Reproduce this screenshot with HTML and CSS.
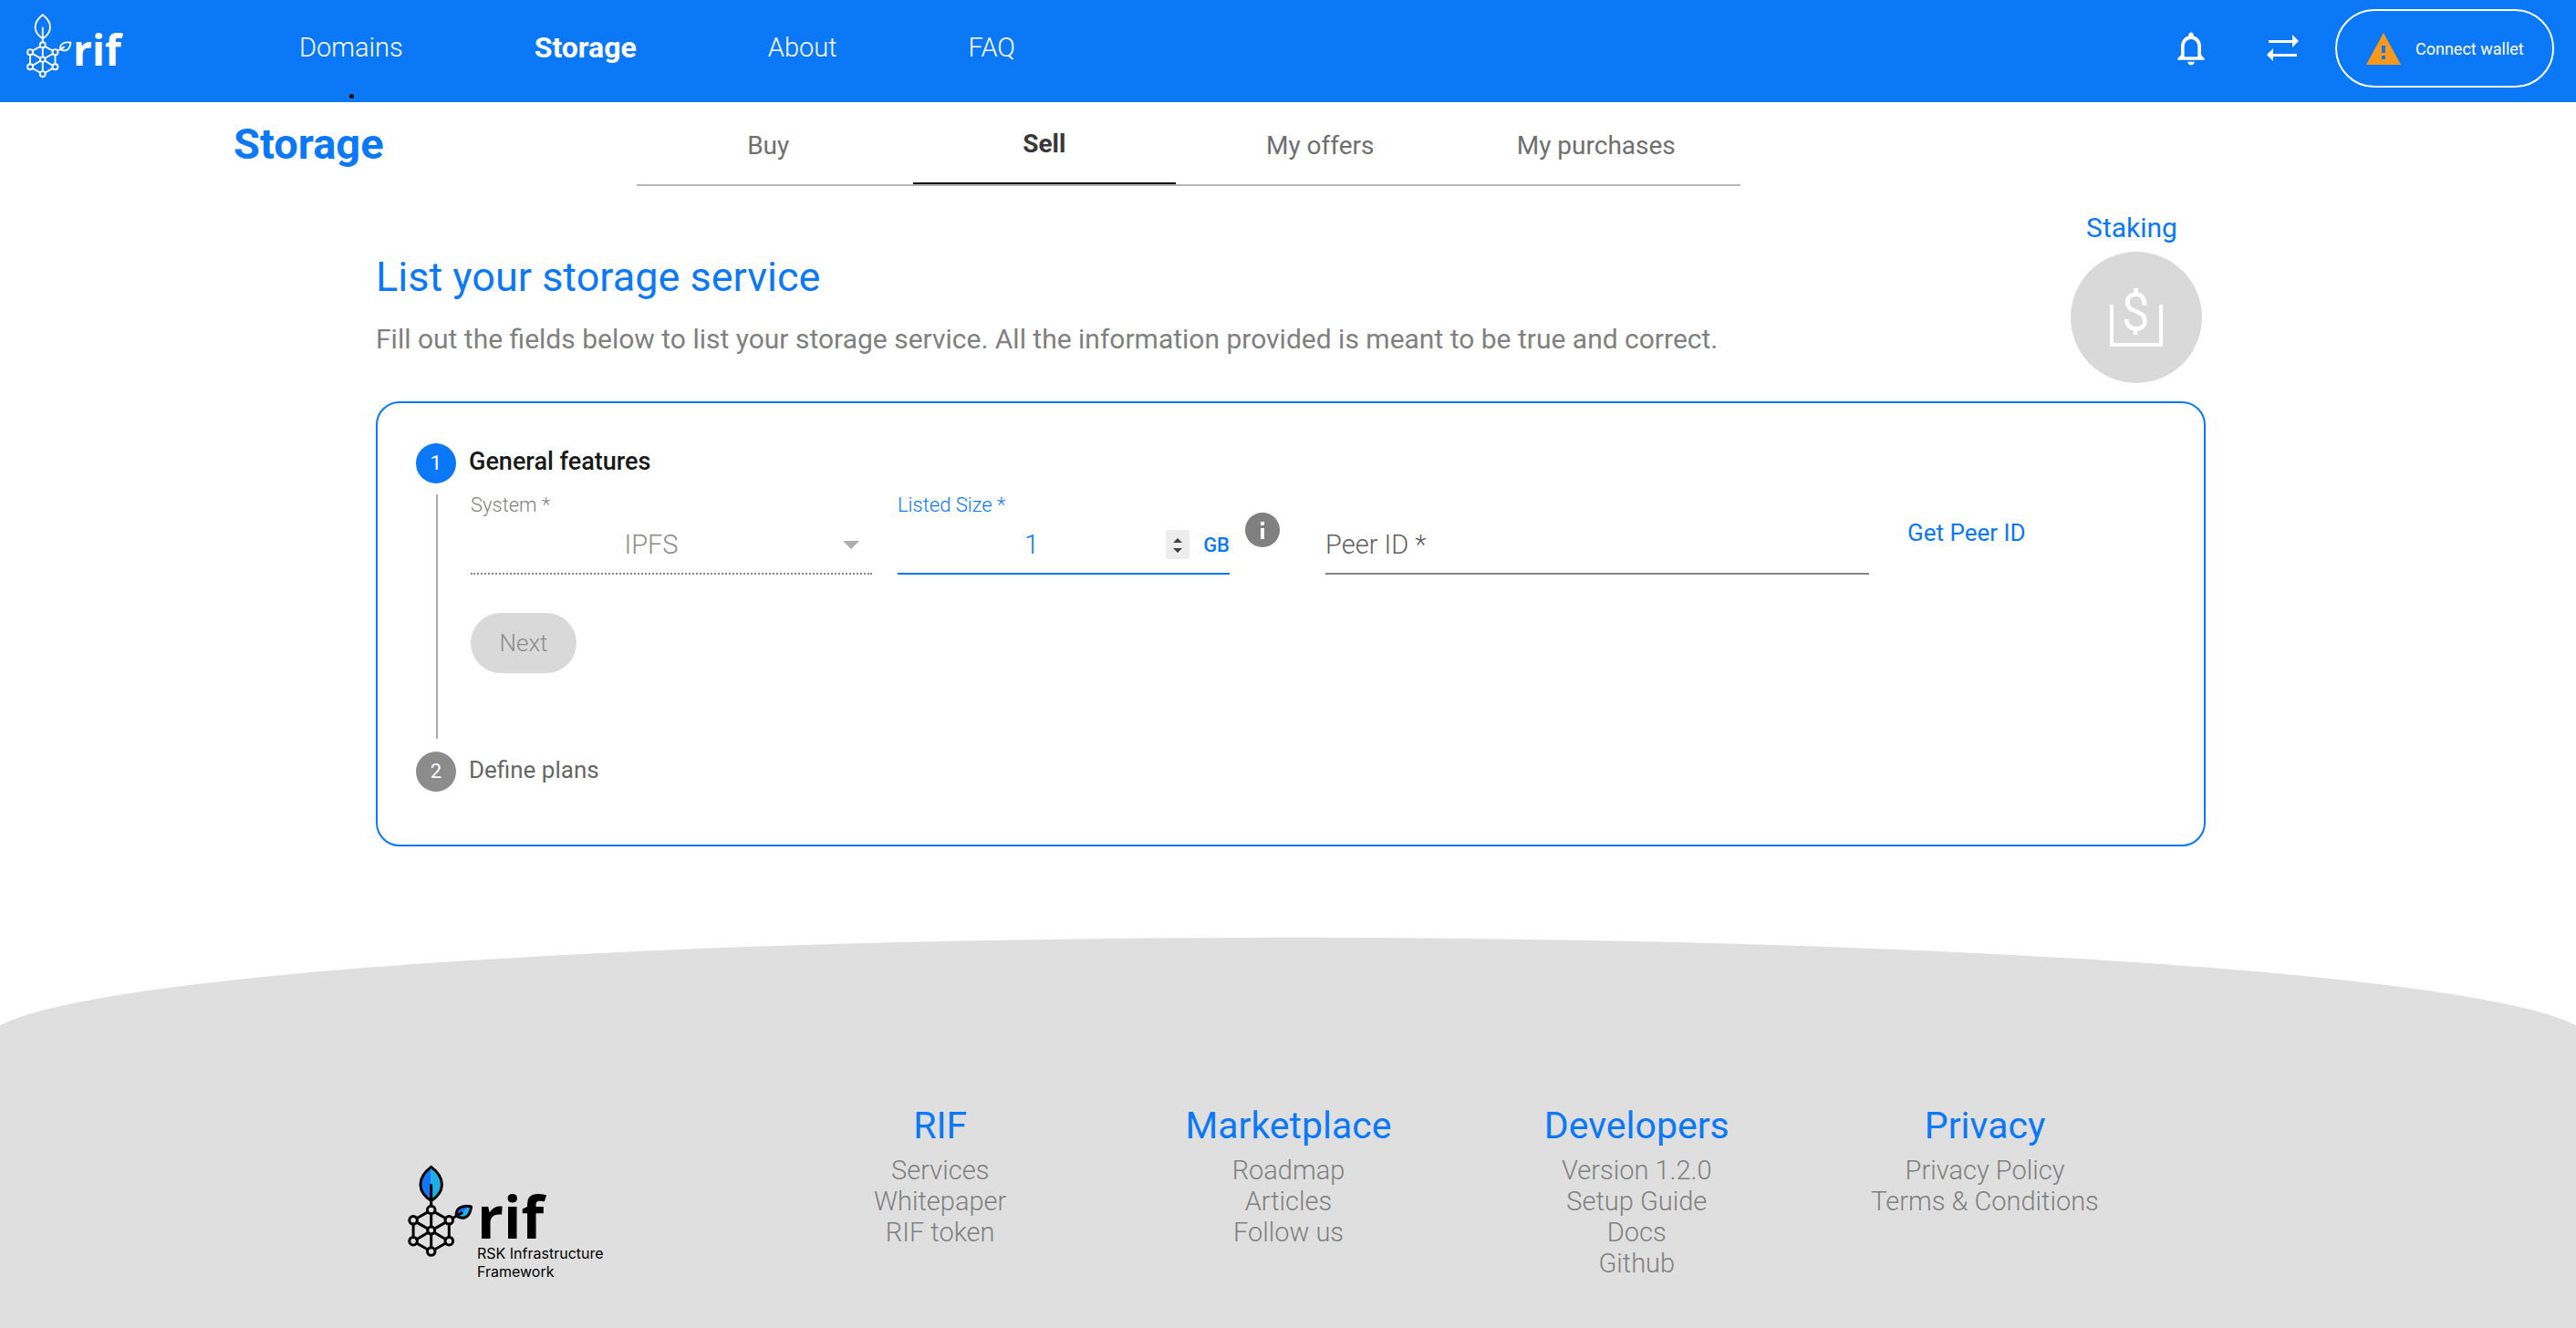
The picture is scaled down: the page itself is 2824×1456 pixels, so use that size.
FILE: index.html
```html
<!DOCTYPE html>
<html lang="en">
<head>
<meta charset="utf-8">
<meta name="viewport" content="width=device-width, initial-scale=1">
<title>RIF Storage - Sell</title>
<link rel="stylesheet" href="styles.css">
</head>
<body>
<svg class="defs" aria-hidden="true">
  <symbol id="rif-mark" viewBox="78 50 222 310">
    <path class="leaf-a" d="M158 60C106 100 114 142 158 172Z"/>
    <path class="leaf-b" d="M158 60C210 100 202 142 158 172Z"/>
    <path class="leaf-a" d="M240 222C238 194 264 186 290 191Z"/>
    <path class="leaf-b" d="M240 222C272 240 287 218 290 191Z"/>
    <g class="mark-line">
      <path d="M158 60C108 98 114 145 158 172C202 145 208 98 158 60ZM158 121V189M241 222C238 194 264 186 290 191C287 218 272 240 241 222ZM228 230L259 212"/>
      <path d="M158 215V257M158 283V326M99 249V292M217 249V292M147 209L110 230M169 209L206 230M110 243L147 264M206 243L169 264M110 299L147 277M206 299L169 277M110 312L147 333M206 312L169 333"/>
      <circle cx="158" cy="202" r="13"/><circle cx="217" cy="236" r="13"/><circle cx="217" cy="305" r="13"/>
      <circle cx="158" cy="339" r="13"/><circle cx="99" cy="305" r="13"/><circle cx="99" cy="236" r="13"/>
      <circle cx="158" cy="270" r="12"/>
    </g>
  </symbol>
</svg>

<header class="topbar">
  <a class="brand" href="#" aria-label="RIF home">
    <svg class="brand-mark"><use href="#rif-mark"/></svg>
    <span class="brand-name">rif</span>
  </a>
  <nav class="main-nav">
    <a class="has-dot" href="#">Domains</a>
    <a class="current" href="#">Storage</a>
    <a href="#">About</a>
    <a href="#">FAQ</a>
  </nav>
  <div class="actions">
    <button class="icon-button" type="button" aria-label="Notifications">
      <svg class="bell" viewBox="0 0 24 24"><path fill="currentColor" d="M12 22c1.1 0 2-.9 2-2h-4c0 1.100.9 2 2 2zm6-6v-5c0-3.070-1.630-5.640-4.500-6.320V4c0-.83-.67-1.500-1.500-1.500s-1.500.67-1.500 1.500v.68C7.640 5.360 6 7.920 6 11v5l-2 2v1h16v-1l-2-2zm-2 1H8v-6c0-2.480 1.510-4.500 4-4.500s4 2.020 4 4.500v6z"/></svg>
    </button>
    <button class="icon-button" type="button" aria-label="Transactions">
      <svg class="swap" viewBox="0 0 35 30"><path fill="currentColor" d="M2 6H28V0L35 7L28 14V9H2ZM33 21H7V15L0 22L7 29V24H33Z"/></svg>
    </button>
    <button class="wallet" type="button">
      <svg class="warning" viewBox="0 0 38 35"><path fill="#f8991d" fill-rule="evenodd" d="M19 0L38 35H0ZM17 14V22H21V14ZM17 25V29H21V25Z"/></svg>
      Connect wallet
    </button>
  </div>
</header>

<section class="subbar">
  <h1>Storage</h1>
  <nav class="tabs">
    <a href="#">Buy</a>
    <a class="current" href="#">Sell</a>
    <a href="#">My offers</a>
    <a href="#">My purchases</a>
  </nav>
</section>

<main class="content">
  <div class="intro">
    <div class="intro-text">
      <h2>List your storage service</h2>
      <p>Fill out the fields below to list your storage service. All the information provided is meant to be true and correct.</p>
    </div>
    <div class="staking">
      <span class="staking-label" id="staking-label">Staking</span>
      <button class="staking-button" type="button" aria-labelledby="staking-label">
        <svg viewBox="0 0 174 192" fill="none" stroke="#fff"><path stroke-width="12" d="M6 54V186H168V54"/><path stroke-width="14" d="M114 56C114 28 100 20 86 20C68 20 58 32 58 46C58 64 68 69 86 76C104 83 115 90 115 108C115 124 104 133 85 133C66 133 55 122 55 102M86 0V20M84 133V153"/></svg>
      </button>
    </div>
  </div>

  <form class="card">
    <div class="step">
      <span class="step-number active">1</span>
      <h3 class="step-title active">General features</h3>
    </div>
    <div class="step-body">
      <div class="fields">
        <div class="field">
          <label for="system">System *</label>
          <div class="control disabled">
            <select id="system" disabled><option>IPFS</option></select>
            <svg class="caret" viewBox="0 0 18 9"><path fill="#adadad" d="M0 0H18L9 9Z"/></svg>
          </div>
        </div>
        <div class="size-group">
          <div class="field focused">
            <label for="size">Listed Size *</label>
            <div class="control">
              <input id="size" type="number" value="1">
              <svg class="spinner" viewBox="0 0 26 32"><path fill="#404040" d="M8 14L13 9L18 14ZM8 20L13 25L18 20Z"/></svg>
              <span class="unit">GB</span>
            </div>
          </div>
          <svg class="info" viewBox="0 0 38 38" role="img" aria-label="Information"><circle cx="19" cy="19" r="19" fill="#808080"/><path fill="#fff" d="M17 10H21V14H17ZM17 17H21V29H17Z"/></svg>
        </div>
        <div class="field peer">
          <div class="control">
            <input type="text" placeholder="Peer ID *" aria-label="Peer ID">
          </div>
        </div>
        <a class="peer-link" href="#">Get Peer ID</a>
      </div>
      <button class="next" type="button" disabled>Next</button>
    </div>
    <div class="step">
      <span class="step-number">2</span>
      <h3 class="step-title">Define plans</h3>
    </div>
  </form>
</main>

<footer class="footer">
  <a class="footer-brand" href="#">
    <svg class="footer-mark" aria-hidden="true"><use href="#rif-mark"/></svg>
    <span class="footer-words">
      <span class="footer-name">rif</span>
      <span class="footer-caption">RSK Infrastructure<br>Framework</span>
    </span>
  </a>
  <div class="footer-column">
    <h2>RIF</h2>
    <a href="#">Services</a>
    <a href="#">Whitepaper</a>
    <a href="#">RIF token</a>
  </div>
  <div class="footer-column">
    <h2>Marketplace</h2>
    <a href="#">Roadmap</a>
    <a href="#">Articles</a>
    <a href="#">Follow us</a>
  </div>
  <div class="footer-column">
    <h2>Developers</h2>
    <a href="#">Version 1.2.0</a>
    <a href="#">Setup Guide</a>
    <a href="#">Docs</a>
    <a href="#">Github</a>
  </div>
  <div class="footer-column">
    <h2>Privacy</h2>
    <a href="#">Privacy Policy</a>
    <a href="#">Terms &amp; Conditions</a>
  </div>
</footer>
</body>
</html>
```
FILE: styles.css
```css
:root {
  --blue: #0b78f7;
  --grey: #808080;
  --disabled: #d9d9d9;
}

* {
  box-sizing: border-box;
}

html {
  height: 100%;
}

body {
  display: flex;
  flex-direction: column;
  min-height: 100%;
  margin: 0;
  overflow-x: hidden;
  background: #fff;
  color: var(--grey);
  font-family: Roboto, "Liberation Sans", sans-serif;
  font-size: 29px;
}

h1, h2, h3, p {
  margin: 0;
}

a {
  color: inherit;
  text-decoration: none;
}

button, input, select {
  margin: 0;
  padding: 0;
  border: 0;
  background: none;
  color: inherit;
  font: inherit;
}

svg {
  display: block;
  flex: none;
}

.defs {
  position: absolute;
  width: 0;
  height: 0;
}

.mark-line {
  fill: none;
  stroke: currentColor;
  stroke-width: var(--mark-stroke);
  stroke-linecap: round;
  stroke-linejoin: round;
}

.leaf-a {
  fill: var(--leaf-a);
}

.leaf-b {
  fill: var(--leaf-b);
}

/* Top bar */
.topbar {
  display: flex;
  align-items: center;
  height: 112px;
  padding: 0 24px 0 28px;
  background: var(--blue);
  color: #fff;
}

.brand {
  --mark-stroke: 8px;
  --leaf-a: none;
  --leaf-b: none;
  display: flex;
  align-items: center;
  width: 300px;
  padding-bottom: 12px;
}

.brand-mark {
  width: 52px;
  height: 72px;
}

.brand-name {
  padding-top: 8px;
  font: 700 46px/60px "Open Sans", sans-serif;
}

.main-nav {
  display: flex;
  align-items: center;
  gap: 144px;
  padding-bottom: 8px;
  font-weight: 300;
  line-height: 40px;
}

.main-nav .current {
  font-size: 32px;
  font-weight: 700;
}

.has-dot {
  position: relative;
}

.has-dot::after {
  position: absolute;
  top: 71px;
  left: 50%;
  width: 5px;
  height: 5px;
  margin-left: -2px;
  border-radius: 50%;
  background: #000;
  content: "";
}

.actions {
  display: flex;
  align-items: center;
  margin-left: auto;
  padding-bottom: 6px;
}

.icon-button {
  display: flex;
  align-items: center;
  justify-content: center;
  width: 100px;
  height: 48px;
}

.bell {
  width: 44px;
  height: 44px;
}

.swap {
  width: 35px;
  height: 30px;
}

.wallet {
  display: flex;
  align-items: center;
  gap: 16px;
  width: 240px;
  height: 86px;
  margin-left: 8px;
  padding-left: 32px;
  border: 2px solid #fff;
  border-radius: 43px;
  font-size: 18px;
}

.warning {
  width: 38px;
  height: 35px;
}

/* Section title and tabs */
.subbar {
  display: flex;
  padding: 0 916px 0 256px;
}

.subbar h1 {
  flex: 0 0 442px;
  color: var(--blue);
  font-size: 47px;
  font-weight: 700;
  line-height: 92px;
}

.tabs {
  display: grid;
  flex: 1;
  grid-template-columns: repeat(4, 1fr);
  height: 92px;
  border-bottom: 2px solid #b5b5b5;
  color: #6f6f6f;
  font-size: 28px;
  line-height: 84px;
  text-align: center;
}

.tabs a {
  margin-right: 14px;
  padding-top: 6px;
}

.tabs .current {
  border-bottom: 2px solid #000;
  color: #383838;
  font-weight: 700;
  line-height: 80px;
}

/* Introduction */
.content {
  padding: 26px 406px 0 412px;
}

.intro {
  display: flex;
  align-items: flex-end;
  justify-content: space-between;
  padding-right: 4px;
}

.intro-text {
  padding-bottom: 28px;
}

.intro h2 {
  color: var(--blue);
  font-size: 45px;
  font-weight: 400;
  line-height: 56px;
}

.intro p {
  margin-top: 20px;
  font-size: 30px;
  line-height: 40px;
}

.staking {
  display: flex;
  flex-direction: column;
  align-items: center;
  gap: 6px;
}

.staking-label {
  padding-right: 10px;
  color: var(--blue);
  font-size: 30px;
  line-height: 40px;
}

.staking-button {
  display: grid;
  place-items: center;
  width: 144px;
  height: 144px;
  border-radius: 50%;
  background: var(--disabled);
}

.staking-button svg {
  width: 58px;
  height: 64px;
}

/* Stepper card */
.card {
  margin-top: 20px;
  padding: 44px 42px 58px;
  border: 2px solid var(--blue);
  border-radius: 26px;
}

.step {
  display: flex;
  align-items: flex-start;
  gap: 14px;
  height: 44px;
}

.step-number {
  width: 44px;
  border-radius: 50%;
  background: #8c8c8c;
  color: #fff;
  font-size: 22px;
  line-height: 44px;
  text-align: center;
}

.step-number.active {
  background: var(--blue);
}

.step-title {
  color: #666;
  font-size: 26px;
  font-weight: 400;
  line-height: 40px;
}

.step-title.active {
  color: #181818;
  font-size: 27px;
  font-weight: 500;
}

.step-body {
  margin: 12px 0 14px 22px;
  padding: 0 0 72px 36px;
  border-left: 2px solid #adadad;
}

.fields {
  display: grid;
  grid-template-columns: minmax(0, 440fr) minmax(0, 419fr) minmax(0, 618fr) minmax(0, 297fr);
  column-gap: 28px;
  font-weight: 300;
}

.field label {
  display: block;
  font-size: 22px;
  line-height: 24px;
}

.control {
  display: flex;
  align-items: center;
  height: 64px;
  border-bottom: 2px solid #858585;
}

.control input,
.control select {
  flex: 1;
  min-width: 0;
  height: 62px;
  outline: 0;
}

.control.disabled {
  padding-right: 14px;
  border-bottom-style: dotted;
}

.control select {
  padding-right: 12px;
  appearance: none;
  color: #8c8c8c;
  opacity: 1;
  text-align-last: center;
}

.caret {
  width: 18px;
  height: 9px;
}

.size-group {
  display: flex;
  gap: 17px;
}

.focused {
  flex: 1;
  min-width: 0;
  color: var(--blue);
}

.focused .control {
  border-color: var(--blue);
}

.focused input {
  appearance: textfield;
  text-align: center;
}

.focused input::-webkit-inner-spin-button {
  appearance: none;
}

.spinner {
  width: 26px;
  height: 32px;
  border-radius: 2px;
  background: #ededed;
}

.unit {
  width: 44px;
  font-size: 22px;
  font-weight: 500;
  text-align: right;
}

.info {
  width: 38px;
  height: 38px;
  margin-top: 20px;
}

.peer {
  padding: 24px 0 0 22px;
}

.peer input::placeholder {
  color: #616161;
  opacity: 1;
}

.peer-link {
  padding: 22px 0 0 14px;
  color: var(--blue);
  font-size: 26px;
  font-weight: 400;
  line-height: 40px;
}

.next {
  width: 116px;
  height: 66px;
  margin-top: 42px;
  border-radius: 33px;
  background: var(--disabled);
  color: #8c8c8c;
  font-size: 26px;
  font-weight: 300;
}

/* Footer */
.footer {
  display: grid;
  flex: 1;
  grid-template-columns: 408fr repeat(4, 382fr);
  align-items: start;
  margin: 100px -14px 0;
  padding: 180px 471px 40px 446px;
  border-radius: 50% 50% 0 0 / 112px 112px 0 0;
  background: #dfdfdf;
}

.footer-brand {
  --mark-stroke: 9px;
  --leaf-a: #1277f8;
  --leaf-b: #1bb0e6;
  display: flex;
  gap: 3px;
  padding: 68px 0 0 14px;
  color: #000;
}

.footer-mark {
  width: 74px;
  height: 103px;
}

.footer-name {
  display: block;
  padding-top: 28px;
  font: 700 64px/60px "Open Sans", sans-serif;
}

.footer-caption {
  display: block;
  font: 400 16px/20px Inter, sans-serif;
}

.footer-column {
  display: flex;
  flex-direction: column;
  align-items: center;
  font-weight: 300;
  line-height: 34px;
}

.footer-column h2 {
  margin-bottom: 6px;
  color: var(--blue);
  font-size: 41px;
  font-weight: 400;
  line-height: 52px;
}
```
